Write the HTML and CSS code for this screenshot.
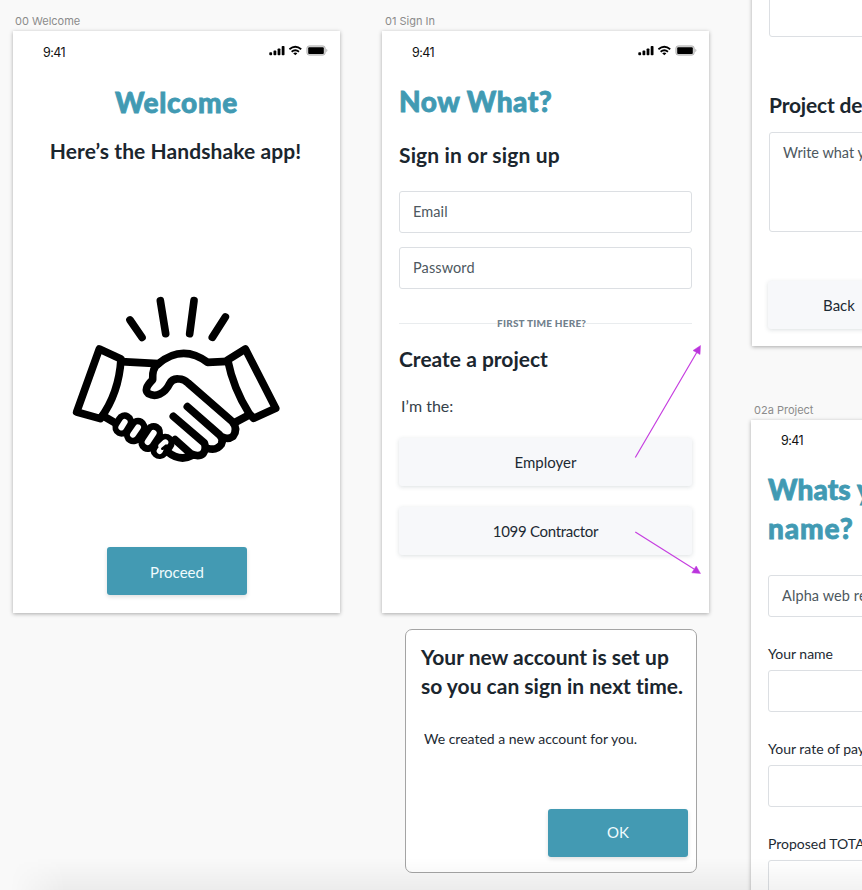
FILE: index.html
```html
<!DOCTYPE html>
<html lang="en">
<head>
<meta charset="utf-8">
<title>Handshake</title>
<link rel="stylesheet" href="styles.css">
</head>
<body>
<svg width="0" height="0" class="defs">
  <symbol id="status" viewBox="0 0 60 12">
    <rect x="0.3" y="7.2" width="2.8" height="3" rx=".8"/>
    <rect x="4.5" y="5.6" width="2.8" height="4.6" rx=".8"/>
    <rect x="8.6" y="3.4" width="2.8" height="6.8" rx=".8"/>
    <rect x="12.7" y="1" width="2.8" height="9.2" rx=".8"/>
    <path d="M20.4 4.2Q26.3-.8 32.2 4.2M22.6 6.7Q26.3 3.7 30 6.7" fill="none" stroke="#000" stroke-width="1.8"/>
    <path d="M24.2 8.2Q26.3 6.8 28.4 8.2L26.3 10.3Z"/>
    <rect x="37.9" y=".9" width="18.3" height="9.2" rx="2.4" fill="#ddd" stroke="#aaa" stroke-width=".9"/>
    <rect x="39.2" y="2.2" width="15.6" height="6.7" rx="1"/>
    <path d="M57.4 3.8Q59.3 5.5 57.4 7.2Z" fill="#aaa"/>
  </symbol>
</svg>
<main class="canvas">
  <section class="frame welcome">
    <div class="frame-name">00 Welcome</div>
    <div class="board">
      <div class="status"><span>9:41</span><svg width="60" height="12"><use href="#status"/></svg></div>
      <h1>Welcome</h1>
      <h2>Here’s the Handshake app!</h2>
      <svg class="hands" width="230" height="190" viewBox="0 0 690 570" fill="none" stroke="#000" stroke-width="23" stroke-linecap="round" stroke-linejoin="round">
        <path d="M301 47L317 146M402 47L389 146M210 105L246 157M496 96L457 157"/>
        <path d="M118 192L50 381L121 401Q177 325 183 222Z"/>
        <path d="M556 192L647 370L581 400L567 385Q520 310 503 225Z"/>
        <path d="M183 230L295 236Q368 176 443 232L503 229M567 390L522 414M128 392L168 415"/>
        <path d="M295 236Q276 248 278 284Q249 312 265 326C287 338 314 327 329 296Q337 280 356 282Q370 281 384 294L517 410Q535 431 519 454Q505 464 489 457"/>
        <path d="M382 365L479 450Q492 463 484 478Q470 498 443 490M340 394L433 474Q440 491 430 505Q416 518 392 506L345 464M322 500Q360 532 400 510"/>
        <g stroke-width="56">
          <path d="M185 427L194 410M220 450L234 426M263 473L281 442M299 494L316 474"/>
        </g>
        <g stroke="#fff" stroke-width="18">
          <path d="M184 427L194 411M219 449L234 427M263 471L281 444M304 483L316 472M299 498L301 495"/>
        </g>
        <path d="M307 491L318 482" stroke-width="8"/>
      </svg>
      <button class="primary">Proceed</button>
    </div>
  </section>

  <section class="frame signin">
    <div class="frame-name">01 Sign In</div>
    <div class="board">
      <div class="status"><span>9:41</span><svg width="60" height="12"><use href="#status"/></svg></div>
      <h1>Now What?</h1>
      <h2>Sign in or sign up</h2>
      <div class="field email">Email</div>
      <div class="field password">Password</div>
      <div class="divider"><span>FIRST TIME HERE?</span></div>
      <h2 class="create">Create a project</h2>
      <p class="role">I’m the:</p>
      <button class="secondary">Employer</button>
      <button class="secondary contractor">1099 Contractor</button>
    </div>
  </section>

  <section class="dialog">
    <h2>Your new account is set up<br>so you can sign in next time.</h2>
    <p>We created a new account for you.</p>
    <button class="primary">OK</button>
  </section>

  <section class="board details">
    <div class="field"></div>
    <h2>Project de</h2>
    <div class="field area">Write what y</div>
    <button class="secondary">Back</button>
  </section>

  <section class="frame project">
    <div class="frame-name">02a Project</div>
    <div class="board">
      <div class="status"><span>9:41</span></div>
      <h1><span class="tight">Whats y</span><br>name?</h1>
      <div class="field alpha">Alpha web re</div>
      <label>Your name</label>
      <div class="field"></div>
      <label>Your rate of pay</label>
      <div class="field"></div>
      <label>Proposed TOTA</label>
      <div class="field"></div>
    </div>
  </section>

  <svg class="arrows" width="80" height="240" viewBox="0 0 80 240" stroke="#c63fe0" fill="#b935dc">
    <path d="M5.3 117.5L67 12M5.3 192L64 229" stroke-width="1.2" fill="none"/>
    <path d="M70.5 5.5L70 14.5L63 10.5ZM70.5 233.5L61.8 232.8L66.2 226Z" stroke-width=".5"/>
  </svg>
  <div class="edge-shade"></div>
</main>
</body>
</html>
```

FILE: styles.css
```css
* { box-sizing: border-box; }
body { margin: 0; background: #f9f9f9; font-family: Lato, sans-serif; font-variant-ligatures: none; color: #1d2a33; }
.defs { position: absolute; }
.canvas { position: relative; width: 862px; height: 890px; overflow: hidden; }

.frame { position: absolute; width: 327px; }
.welcome { left: 13px; top: 13px; }
.signin { left: 382px; top: 13px; }
.project { left: 751px; top: 402px; }
.frame-name { height: 18px; padding-left: 2px; font: 11px/17px Inter, sans-serif; color: #8b8b8b; white-space: nowrap; }
.signin .frame-name { padding-left: 3px; }
.project .frame-name { padding-left: 3px; }
.board { display: flex; flex-direction: column; height: 582px; padding: 0 17px; background: #fff; box-shadow: 0 1px 4px rgba(0,0,0,.32); white-space: nowrap; overflow: hidden; }

.status { display: flex; justify-content: space-between; height: 43px; padding: 14px 0 0 13px; margin-right: -6px; font: 12.5px/16px Inter, sans-serif; letter-spacing: -.6px; color: #111; }
.status svg { display: block; }

h1 { margin: 0; font-size: 28px; line-height: 38px; font-weight: 900; color: #419ab3; -webkit-text-stroke: .8px #419ab3; letter-spacing: .5px; }
h2 { margin: 0; font-size: 21px; line-height: 28px; font-weight: 700; color: #1b262e; }
p { margin: 0; }
button { display: block; border: 0; padding: 0; font-family: inherit; font-size: 15px; line-height: 20px; }
.primary { width: 140px; height: 48px; border-radius: 3px; background: #439ab3; color: #f0fbfd; box-shadow: 0 2px 4px rgba(0,0,0,.13); }
.secondary { width: 293px; height: 48px; border-radius: 3px; background: #f7f8fa; color: #1d2a33; box-shadow: 0 1px 4px rgba(50,70,80,.17); font-weight: 400; flex: none; }
.field { flex: none; width: 293px; height: 42px; padding: 0 13px; border: 1px solid #dcdfe3; border-radius: 3px; font-size: 14.5px; line-height: 40px; letter-spacing: .1px; color: #4d5860; }

.welcome h1 { margin-top: 9px; text-align: center; letter-spacing: .7px; }
.welcome h2 { margin-top: 16px; margin-left: -2px; text-align: center; letter-spacing: .08px; }
.hands { flex: none; margin: 120px 0 0 30px; }
.welcome .primary { margin: 72px 0 0 77px; padding-top: 2px; }

.signin h1 { margin-top: 8px; }
.signin h2 { margin-top: 21px; letter-spacing: .15px; }
.signin .email { margin-top: 22px; }
.signin .password { margin-top: 14px; }
.divider { display: flex; align-items: center; width: 293px; height: 16px; margin-top: 26px; font-size: 10px; font-weight: 900; letter-spacing: .23px; color: #71808c; }
.divider::before, .divider::after { content: ""; flex: 1; height: 1px; background: #e9ecee; }
.divider::before { flex: 0 0 98px; }
.signin .create { margin-top: 14px; letter-spacing: 0; }
.role { margin: 23px 0 22px 2px; font-size: 16px; line-height: 20px; color: #35424a; }
.signin .contractor { margin-top: 21px; letter-spacing: -.3px; }

.dialog { position: absolute; left: 405px; top: 629px; width: 292px; height: 244px; display: flex; flex-direction: column; padding: 14px 8px 15px 15px; border: 1px solid #a4a4a4; border-radius: 7px; background: #fff; white-space: nowrap; }
.dialog h2 { line-height: 28.5px; margin-top: -1px; }
.dialog p { margin: 28px 0 0 3px; font-size: 14px; line-height: 22px; }
.dialog .primary { margin: auto 0 0 auto; padding-bottom: 2px; }

.details { position: absolute; left: 752px; top: -40px; width: 327px; height: 386px; padding-top: 35px; }
.details h2 { margin-top: 54px; letter-spacing: -.2px; }
.details .area { height: 100px; margin-top: 13px; line-height: 40px; letter-spacing: 0; }
.details .secondary { width: 142px; margin: 49px 0 0 -1px; }

.project .board { height: 600px; }
.project .status { padding-top: 13px; }
.project h1 { margin-top: 7px; line-height: 38.5px; letter-spacing: .9px; }
.project h1 .tight { letter-spacing: .1px; }
.project .field { margin-top: 6px; }
.project .alpha { margin-top: 28px; }
label { margin-top: 27px; font-size: 14px; line-height: 20px; }

.arrows { position: absolute; left: 630px; top: 340px; }
.edge-shade { position: absolute; left: 0; right: 0; bottom: 0; height: 32px; background: linear-gradient(transparent, rgba(0,0,0,.05)); mask-image: linear-gradient(to right, transparent 10px, #000 65px); }
```
